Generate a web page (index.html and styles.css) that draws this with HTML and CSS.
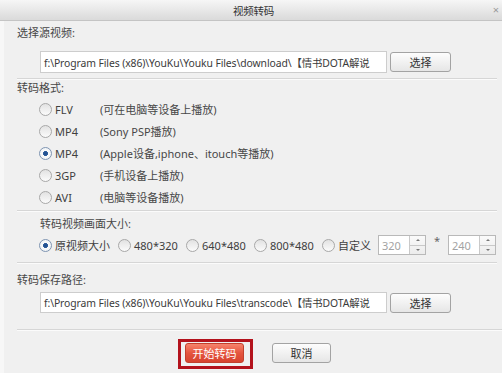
FILE: index.html
```html
<!DOCTYPE html>
<html lang="zh-CN">
<head>
<meta charset="utf-8">
<title>视频转码</title>
<link rel="stylesheet" href="styles.css">
</head>
<body>
<div class="dialog">
  <div class="titlebar"><span></span><span class="title">视频转码</span><span class="close">×</span></div>

  <div class="label l1">选择源视频:</div>
  <div class="pathrow p1">
    <div class="path">f:\Program Files (x86)\YouKu\Youku Files\download\【情书DOTA解说</div>
    <div class="btn">选择</div>
  </div>
  <div class="sep s1"></div>

  <div class="label l2">转码格式:</div>
  <div class="formats">
    <div class="fmt"><span class="radio"></span><span class="fname">FLV</span><span class="fdesc">(可在电脑等设备上播放)</span></div>
    <div class="fmt"><span class="radio"></span><span class="fname">MP4</span><span class="fdesc">(Sony PSP播放)</span></div>
    <div class="fmt"><span class="radio on"></span><span class="fname">MP4</span><span class="fdesc">(Apple设备,iphone、itouch等播放)</span></div>
    <div class="fmt"><span class="radio"></span><span class="fname">3GP</span><span class="fdesc">(手机设备上播放)</span></div>
    <div class="fmt"><span class="radio"></span><span class="fname">AVI</span><span class="fdesc">(电脑等设备播放)</span></div>
  </div>
  <div class="sep s2"></div>

  <div class="label l3">转码视频画面大小:</div>
  <div class="sizerow">
    <div class="opt o1"><span class="radio on"></span><span>原视频大小</span></div>
    <div class="opt"><span class="radio"></span><span>480*320</span></div>
    <div class="opt"><span class="radio"></span><span>640*480</span></div>
    <div class="opt"><span class="radio"></span><span>800*480</span></div>
    <div class="opt ocustom"><span class="radio"></span><span>自定义</span></div>
    <div class="spin"><span class="spin-val">320</span><span class="spin-arrows"><span class="up"></span><span class="down"></span></span></div>
    <div class="star">*</div>
    <div class="spin"><span class="spin-val">240</span><span class="spin-arrows"><span class="up"></span><span class="down"></span></span></div>
  </div>
  <div class="sep s3"></div>

  <div class="label l4">转码保存路径:</div>
  <div class="pathrow p2">
    <div class="path">f:\Program Files (x86)\YouKu\Youku Files\transcode\【情书DOTA解说</div>
    <div class="btn">选择</div>
  </div>
  <div class="sep s4"></div>

  <div class="actions">
    <div class="hl"><div class="primary">开始转码</div></div>
    <div class="btn cancel">取消</div>
  </div>
</div>
</body>
</html>
```

FILE: styles.css
```css
html, body {
  margin: 0;
  padding: 0;
}
body {
  width: 502px;
  height: 373px;
  overflow: hidden;
  background: #f0f0f0;
  font-family: "Noto Sans", "Noto Sans CJK SC", sans-serif;
  font-size: 11px;
  color: #404040;
}
.dialog {
  display: flex;
  flex-direction: column;
  height: 373px;
  background: #f0f0f0;
  box-sizing: border-box;
  border-left: 4px solid #f7f7f7;
}
.titlebar {
  height: 20px;
  display: grid;
  grid-template-columns: 1fr auto 1fr;
  align-items: center;
  padding: 0 3px 0 8px;
  margin-left: -4px;
  background: linear-gradient(#f6f6f6, #dadada);
  border-bottom: 1px solid #c4c4c4;
}
.title {
  color: #333;
  font-size: 10.5px;
  letter-spacing: -0.2px;
}
.close {
  justify-self: end;
  color: #9a9a9a;
  font-size: 11px;
  line-height: 12px;
}
.label {
  height: 20px;
  line-height: 20px;
  padding-left: 13px;
  color: #474747;
}
.l1 { margin-top: 2px; }
.l2 { height: 16px; line-height: 16px; }
.l3 { margin-top: 2px; padding-left: 36px; }
.l4 { margin-top: 6px; }

.pathrow {
  display: flex;
  align-items: center;
  gap: 3px;
  margin-left: 36px;
}
.p1 { margin-top: 8px; height: 22px; }
.p2 { margin-top: 2px; height: 21px; }
.path {
  width: 347px;
  height: 100%;
  box-sizing: border-box;
  background: #fff;
  border: 1px solid #cdcdcd;
  padding-left: 3px;
  white-space: nowrap;
  overflow: hidden;
  display: flex;
  align-items: center;
  color: #3a3a3a;
  font-size: 10.4px;
  letter-spacing: -0.1px;
}
.btn {
  width: 61px;
  height: 20px;
  box-sizing: border-box;
  border: 1px solid #a3a3a3;
  border-radius: 3px;
  background: linear-gradient(#fdfdfd, #e6e6e6);
  display: flex;
  align-items: center;
  justify-content: center;
  color: #333;
}
.sep {
  height: 1px;
  background: #d6d6d6;
  border-bottom: 1px solid #fbfbfb;
  margin-left: 13px;
  margin-right: 5px;
}
.s1 { margin-top: 5px; }
.s2 { margin-top: 2px; }
.s3 { margin-top: 7px; }
.s4 { margin-top: 16px; margin-left: 13px; margin-right: 0; }

.formats {
  display: flex;
  flex-direction: column;
  margin-top: 2px;
}
.fmt {
  height: 22px;
  display: flex;
  align-items: center;
  padding-left: 35px;
}
.radio {
  width: 13px;
  height: 13px;
  box-sizing: border-box;
  border-radius: 50%;
  border: 1px solid #a8a8a8;
  background: linear-gradient(#e2e2e2, #fbfbfb);
  flex: none;
}
.radio.on {
  border-color: #7f95b2;
  background: radial-gradient(circle, #1f4d8c 0, #2a5a9a 2.2px, #fafafa 2.8px, #e8edf3 100%);
}
.fname {
  width: 45px;
  margin-left: 3px;
}
.fdesc {
  color: #474747;
}

.sizerow {
  margin-top: 1px;
  height: 20px;
  display: flex;
  align-items: center;
  padding-left: 35px;
}
.opt {
  width: 68px;
  display: flex;
  align-items: center;
  gap: 3px;
}
.opt.o1 { width: 79px; }
.opt.ocustom { width: 56px; }
.spin {
  width: 48px;
  height: 20px;
  box-sizing: border-box;
  border: 1px solid #b9b9b9;
  background: #fff;
  display: flex;
}
.spin-val {
  flex: 1;
  color: #a3a3a3;
  padding-left: 3px;
  display: flex;
  align-items: center;
}
.spin-arrows {
  width: 15px;
  border-left: 1px solid #c9c9c9;
  display: flex;
  flex-direction: column;
  background: linear-gradient(#fafafa, #ececec);
}
.spin-arrows span {
  flex: 1;
  display: flex;
  align-items: center;
  justify-content: center;
}
.spin-arrows .up { border-bottom: 1px solid #c9c9c9; }
.spin-arrows .up::before {
  content: "";
  border-left: 2px solid transparent;
  border-right: 2px solid transparent;
  border-bottom: 2px solid #777;
}
.spin-arrows .down::before {
  content: "";
  border-left: 2px solid transparent;
  border-right: 2px solid transparent;
  border-top: 2px solid #777;
}
.star {
  width: 22px;
  text-align: center;
  align-self: flex-start;
  margin-top: -2px;
  color: #666;
}

.actions {
  display: flex;
  align-items: flex-start;
  padding-left: 174px;
  margin-top: 8px;
}
.hl {
  border: 3px solid #b3121c;
  padding: 1px 6px 3px 4px;
}
.primary {
  width: 59px;
  height: 20px;
  box-sizing: border-box;
  border: 1px solid #c2402d;
  border-radius: 3px;
  background: linear-gradient(#f7836c, #e5553f 50%, #d7432f);
  color: #fff;
  display: flex;
  align-items: center;
  justify-content: center;
}
.cancel {
  width: 59px;
  margin-left: 19px;
  margin-top: 4px;
}
```
